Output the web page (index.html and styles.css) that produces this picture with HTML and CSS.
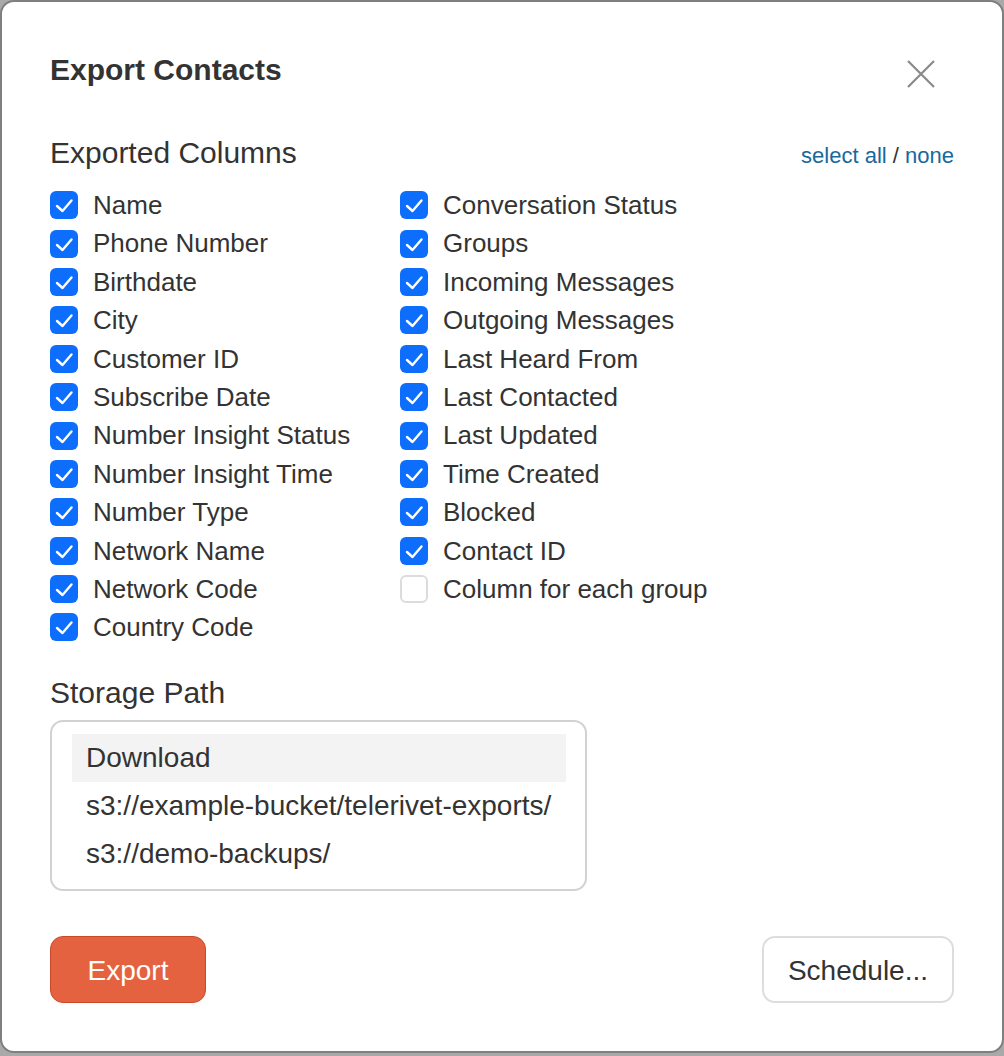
FILE: index.html
```html
<!DOCTYPE html>
<html lang="en">
<head>
<meta charset="utf-8">
<title>Export Contacts</title>
<link rel="stylesheet" href="styles.css">
</head>
<body>
<div class="dialog">
  <div class="header">
    <h1 class="title">Export Contacts</h1>
    <button class="close" aria-label="Close">
      <svg width="28" height="28" viewBox="0 0 28 28"><path d="M1 1L27 27M27 1L1 27" stroke="#8a8a8a" stroke-width="2.2" fill="none"/></svg>
    </button>
  </div>

  <div class="section-head">
    <h2 class="label">Exported Columns</h2>
    <div class="select-links"><a href="#">select all</a> / <a href="#">none</a></div>
  </div>

  <div class="columns">
    <div class="col col-left">
      <div class="item"><span class="box on"><svg viewBox="0 0 28 28"><path d="M7 15l5.5 5L21.5 9.5"/></svg></span>Name</div>
      <div class="item"><span class="box on"><svg viewBox="0 0 28 28"><path d="M7 15l5.5 5L21.5 9.5"/></svg></span>Phone Number</div>
      <div class="item"><span class="box on"><svg viewBox="0 0 28 28"><path d="M7 15l5.5 5L21.5 9.5"/></svg></span>Birthdate</div>
      <div class="item"><span class="box on"><svg viewBox="0 0 28 28"><path d="M7 15l5.5 5L21.5 9.5"/></svg></span>City</div>
      <div class="item"><span class="box on"><svg viewBox="0 0 28 28"><path d="M7 15l5.5 5L21.5 9.5"/></svg></span>Customer ID</div>
      <div class="item"><span class="box on"><svg viewBox="0 0 28 28"><path d="M7 15l5.5 5L21.5 9.5"/></svg></span>Subscribe Date</div>
      <div class="item"><span class="box on"><svg viewBox="0 0 28 28"><path d="M7 15l5.5 5L21.5 9.5"/></svg></span>Number Insight Status</div>
      <div class="item"><span class="box on"><svg viewBox="0 0 28 28"><path d="M7 15l5.5 5L21.5 9.5"/></svg></span>Number Insight Time</div>
      <div class="item"><span class="box on"><svg viewBox="0 0 28 28"><path d="M7 15l5.5 5L21.5 9.5"/></svg></span>Number Type</div>
      <div class="item"><span class="box on"><svg viewBox="0 0 28 28"><path d="M7 15l5.5 5L21.5 9.5"/></svg></span>Network Name</div>
      <div class="item"><span class="box on"><svg viewBox="0 0 28 28"><path d="M7 15l5.5 5L21.5 9.5"/></svg></span>Network Code</div>
      <div class="item"><span class="box on"><svg viewBox="0 0 28 28"><path d="M7 15l5.5 5L21.5 9.5"/></svg></span>Country Code</div>
    </div>
    <div class="col col-right">
      <div class="item"><span class="box on"><svg viewBox="0 0 28 28"><path d="M7 15l5.5 5L21.5 9.5"/></svg></span>Conversation Status</div>
      <div class="item"><span class="box on"><svg viewBox="0 0 28 28"><path d="M7 15l5.5 5L21.5 9.5"/></svg></span>Groups</div>
      <div class="item"><span class="box on"><svg viewBox="0 0 28 28"><path d="M7 15l5.5 5L21.5 9.5"/></svg></span>Incoming Messages</div>
      <div class="item"><span class="box on"><svg viewBox="0 0 28 28"><path d="M7 15l5.5 5L21.5 9.5"/></svg></span>Outgoing Messages</div>
      <div class="item"><span class="box on"><svg viewBox="0 0 28 28"><path d="M7 15l5.5 5L21.5 9.5"/></svg></span>Last Heard From</div>
      <div class="item"><span class="box on"><svg viewBox="0 0 28 28"><path d="M7 15l5.5 5L21.5 9.5"/></svg></span>Last Contacted</div>
      <div class="item"><span class="box on"><svg viewBox="0 0 28 28"><path d="M7 15l5.5 5L21.5 9.5"/></svg></span>Last Updated</div>
      <div class="item"><span class="box on"><svg viewBox="0 0 28 28"><path d="M7 15l5.5 5L21.5 9.5"/></svg></span>Time Created</div>
      <div class="item"><span class="box on"><svg viewBox="0 0 28 28"><path d="M7 15l5.5 5L21.5 9.5"/></svg></span>Blocked</div>
      <div class="item"><span class="box on"><svg viewBox="0 0 28 28"><path d="M7 15l5.5 5L21.5 9.5"/></svg></span>Contact ID</div>
      <div class="item"><span class="box off"></span>Column for each group</div>
    </div>
  </div>

  <h2 class="label storage-label">Storage Path</h2>
  <div class="listbox">
    <div class="option selected">Download</div>
    <div class="option">s3://example-bucket/telerivet-exports/</div>
    <div class="option">s3://demo-backups/</div>
  </div>

  <div class="actions">
    <button class="btn btn-primary">Export</button>
    <button class="btn btn-secondary">Schedule...</button>
  </div>
</div>
</body>
</html>
```

FILE: styles.css
```css
html, body {
  margin: 0;
  padding: 0;
}
body {
  background: #a9a9a9;
  font-family: "Liberation Sans", Arial, sans-serif;
  color: #333333;
  height: 1056px;
}
.dialog {
  box-sizing: border-box;
  width: 1004px;
  height: 1053px;
  background: #ffffff;
  border: 2px solid #7e8080;
  border-radius: 14px;
  padding: 50px 48px 48px 48px;
  display: flex;
  flex-direction: column;
}
.header {
  display: flex;
  justify-content: space-between;
  align-items: flex-start;
}
.title {
  margin: 0;
  font-size: 30px;
  line-height: 36px;
  font-weight: bold;
  color: #333333;
}
.close {
  margin: 8px 19px 0 0;
  padding: 0;
  border: 0;
  background: none;
  width: 28px;
  height: 28px;
  display: block;
}
.close svg {
  display: block;
}
.section-head {
  margin-top: 47px;
  display: flex;
  justify-content: space-between;
  align-items: baseline;
}
.label {
  margin: 0;
  font-size: 30px;
  line-height: 36px;
  font-weight: normal;
  color: #333333;
}
.select-links {
  font-size: 22px;
  color: #333333;
}
.select-links a {
  color: #17699b;
  text-decoration: none;
}
.columns {
  margin-top: 15px;
  display: flex;
}
.col-left {
  width: 350px;
}
.item {
  display: flex;
  align-items: center;
  height: 38.4px;
  font-size: 26px;
  line-height: 38.4px;
  color: #333333;
  white-space: nowrap;
}
.box {
  box-sizing: border-box;
  flex: none;
  width: 28px;
  height: 28px;
  border-radius: 6px;
  margin-right: 15px;
  display: block;
}
.box.on {
  background: #0d6efd;
}
.box.off {
  background: #ffffff;
  border: 2px solid #dcdcdc;
}
.box svg {
  display: block;
  width: 28px;
  height: 28px;
  fill: none;
  stroke: #ffffff;
  stroke-width: 2.4;
  stroke-linecap: round;
  stroke-linejoin: round;
}
.storage-label {
  margin-top: 28px;
}
.listbox {
  margin-top: 9px;
  box-sizing: border-box;
  width: 537px;
  height: 171px;
  border: 2px solid #d2d2d2;
  border-radius: 13px;
  padding: 12px 19px 11px 20px;
}
.option {
  height: 48px;
  line-height: 48px;
  font-size: 28px;
  padding-left: 14px;
  color: #333333;
  white-space: nowrap;
}
.option.selected {
  background: #f3f3f3;
}
.actions {
  margin-top: 45px;
  display: flex;
  justify-content: space-between;
}
.btn {
  box-sizing: border-box;
  height: 67px;
  border-radius: 13px;
  font-family: "Liberation Sans", Arial, sans-serif;
  font-size: 28px;
  padding: 3px 0 0 0;
  text-align: center;
}
.btn-primary {
  width: 156px;
  background: #e46240;
  border: 1.5px solid #c8492a;
  color: #ffffff;
}
.btn-secondary {
  width: 192px;
  background: #ffffff;
  border: 2px solid #dddddd;
  color: #333333;
}
```
